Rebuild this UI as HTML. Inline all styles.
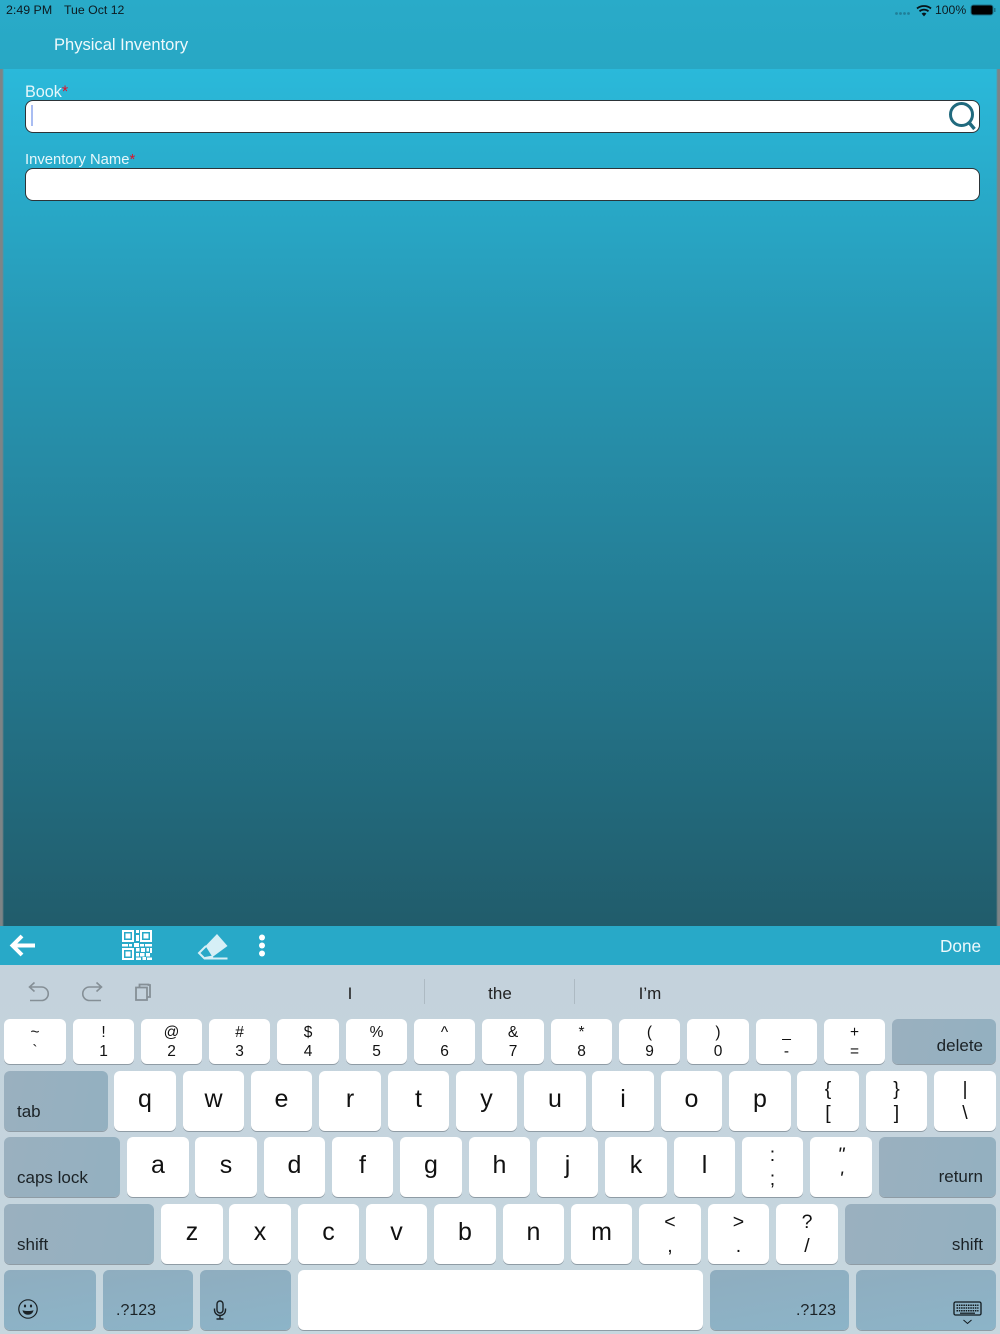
<!DOCTYPE html>
<html><head><meta charset="utf-8"><style>
*{box-sizing:border-box}
html,body{margin:0;padding:0}
body{width:1000px;height:1334px;position:relative;overflow:hidden;font-family:"Liberation Sans",sans-serif;background:#c5d4dd}
.a{position:absolute;white-space:nowrap}
.k{position:absolute;width:62px;background:#fff;border-radius:6px;box-shadow:0 1px 0 #8f9ca5;color:#111;text-align:center}
.g{background:linear-gradient(100deg,#9ab0bf,#93b0c0);color:#1b2226}
.h{background:linear-gradient(170deg,#8fadbf,#8cb4c8)}
.r1{top:1019px;height:45px}.r2{top:1071px;height:60px}.r3{top:1137px;height:60px}.r4{top:1204px;height:60px}.r5{top:1270px;height:60px}
.l{font-size:25px;line-height:57px}
.s1 span,.s2 span{position:absolute;left:0;right:0;display:block;text-align:center}
.s1{font-size:15.5px}.s1 span:first-child{top:5px;line-height:18px}.s1 span:last-child{top:24px;line-height:18px}
.s2{font-size:19.5px}.s2 span:first-child{top:6px;line-height:24px}.s2 span:last-child{top:30px;line-height:24px}
.lb{position:absolute;left:13px;bottom:8px;font-size:17px;line-height:22px}
.rb{position:absolute;right:13px;bottom:8px;font-size:17px;line-height:22px}
.inp{position:absolute;left:25px;width:955px;height:33px;background:#fff;border:1.5px solid #2c3438;border-radius:8px}
</style></head><body>
<div class="a" style="left:0;top:0;width:1000px;height:69px;background:linear-gradient(#29abc9,#28a7c4)"></div>
<div class="a" style="left:0;top:69px;width:1000px;height:857px;background:linear-gradient(#2ab9da 0%,#2799b6 30%,#247a91 65%,#215c6b 100%)"></div>
<div class="a" style="left:0;top:69px;width:4px;height:857px;background:linear-gradient(90deg,#7d8486,#7d8486 55%,rgba(125,132,134,0))"></div>
<div class="a" style="left:996px;top:69px;width:4px;height:857px;background:linear-gradient(270deg,#7d8486,#7d8486 55%,rgba(125,132,134,0))"></div>

<div class="a" style="left:6px;top:3px;font-size:12.4px;line-height:14px;color:#0d1a20">2:49 PM</div>
<div class="a" style="left:64px;top:3px;font-size:12.3px;line-height:14px;color:#0d1a20">Tue Oct 12</div>
<svg class="a" style="left:894px;top:4px" width="106" height="14" viewBox="0 0 106 14">
<g fill="#1f7f98"><circle cx="2.5" cy="9.500" r="1.400"/><circle cx="6.500" cy="9.500" r="1.400"/><circle cx="10.500" cy="9.500" r="1.400"/><circle cx="14.500" cy="9.500" r="1.400"/></g>
<g fill="none" stroke="#07141a" stroke-width="1.800"><path d="M23 4.500a11 11 0 0 1 14 0"/><path d="M25.500 7.300a7 7 0 0 1 9 0"/></g><path d="M27.600 9.600a3.600 3.600 0 0 1 4.800 0L30 12.400z" fill="#07141a"/>
<rect x="77" y="1" width="22" height="10" rx="2.500" fill="#000" stroke="#1b7188" stroke-width="1"/><rect x="100" y="4" width="1.500" height="4" fill="#1b7188"/>
</svg>
<div class="a" style="left:935px;top:3px;font-size:12.200px;line-height:14px;color:#0d1a20">100%</div>
<div class="a" style="left:54px;top:35px;font-size:16.550px;line-height:20px;color:#eef9fc">Physical Inventory</div>

<div class="a" style="left:25px;top:83px;font-size:16.200px;line-height:18px;color:#e6f7fb">Book<span style="color:#e0102a">*</span></div>
<div class="inp" style="top:100px"></div>
<div class="a" style="left:31px;top:105px;width:2px;height:21px;background:#a9bdf2"></div>
<svg class="a" style="left:946px;top:100px" width="34" height="34" viewBox="0 0 34 34"><circle cx="15.500" cy="14.500" r="11" fill="none" stroke="#216a7e" stroke-width="3"/><path d="M23 22.500L28.500 29" stroke="#216a7e" stroke-width="3.400"/></svg>
<div class="a" style="left:25px;top:151px;font-size:14.800px;line-height:18px;color:#e6f7fb">Inventory Name<span style="color:#e0102a">*</span></div>
<div class="inp" style="top:168px"></div>

<div class="a" style="left:0;top:926px;width:1000px;height:39px;background:#28a9c8"></div>
<svg class="a" style="left:8px;top:932px" width="30" height="28" viewBox="0 0 30 28"><path d="M3.500 13.500H27M14 4L4.500 13.500L14 23" fill="none" stroke="#fff" stroke-width="4"/></svg>
<svg class="a" style="left:121px;top:929px" width="32" height="32" viewBox="0 0 32 32" fill="#fff">
<path fill-rule="evenodd" d="M1 1h12v12H1zM3 3v8h8V3zM19 1h12v12H19zM21 3v8h8V3zM1 19h12v12H1zM3 21v8h8v-8z"/>
<path d="M4.500 4.500h5v5h-5zM22.500 4.500h5v5h-5zM4.500 22.500h5v5h-5zM15 1h3v3h-3zM15 6h3v6h-3zM1 15h6v2.500H1zM8 15h3v2.500H8zM13 14h5v4h-5zM19 15h4v2.500h-4zM24 15h7v2.500h-7zM15 19h3.500v3.500H15zM20 19h4v4h-4zM25.500 19h2.500v3.500h-2.500zM29 19h2v5h-2zM15 24h3v3.500h-3zM19 24h4.500v3.500H19zM25 24h4v3.500h-4zM15 28.500h5V31h-5zM21.500 28h3.500v3h-3.500zM26 28.500h5V31h-5z"/></svg>
<svg class="a" style="left:197px;top:932px" width="34" height="30" viewBox="0 0 34 30"><path d="M20 2L30.500 14L15.500 25L8.500 14z" fill="#d6eff6"/><path d="M9 14L2 21L7.500 26.500H30.500M8 26L16 24.500" fill="none" stroke="#d6eff6" stroke-width="2"/></svg>
<svg class="a" style="left:256px;top:933px" width="12" height="26" viewBox="0 0 12 26" fill="#fff"><circle cx="6" cy="4.500" r="3"/><circle cx="6" cy="12.500" r="3"/><circle cx="6" cy="20.500" r="3"/></svg>
<div class="a" style="left:940px;top:936px;font-size:17.200px;line-height:20px;color:#eef9fc">Done</div>

<div class="a" style="left:0;top:965px;width:1000px;height:369px;background:linear-gradient(#c4d2dc,#c6d7df)"></div>
<svg class="a" style="left:25px;top:978px" width="135" height="30" viewBox="0 0 135 30" fill="none" stroke="#858f96" stroke-width="1.600">
<path d="M5 9H16.500a6 6 0 0 1 0 13.500H5M9.500 4.500L4.500 9L9.500 13.500"/>
<path d="M76 9H64.500a6 6 0 0 0 0 13.500H76M71.500 4.500L76.500 9L71.500 13.500"/>
<path d="M111 9.500h11v12.500h-11zM114.500 9.500V6.500h9V7h1.500v12h-3" stroke-width="1.800"/></svg>
<div class="a" style="left:325px;top:984px;width:50px;text-align:center;font-size:17px;line-height:20px;color:#222">I</div>
<div class="a" style="left:424px;top:979px;width:1px;height:25px;background:#adbac3"></div>
<div class="a" style="left:470px;top:984px;width:60px;text-align:center;font-size:17px;line-height:20px;color:#222">the</div>
<div class="a" style="left:574px;top:979px;width:1px;height:25px;background:#adbac3"></div>
<div class="a" style="left:620px;top:984px;width:60px;text-align:center;font-size:17px;line-height:20px;color:#222">I’m</div>

<div class="k r1 s1" style="left:4px"><span>~</span><span>`</span></div>
<div class="k r1 s1" style="left:73px;width:61px"><span>!</span><span>1</span></div>
<div class="k r1 s1" style="left:141px;width:61px"><span>@</span><span>2</span></div>
<div class="k r1 s1" style="left:209px;width:61px"><span>#</span><span>3</span></div>
<div class="k r1 s1" style="left:277px"><span>$</span><span>4</span></div>
<div class="k r1 s1" style="left:346px;width:61px"><span>%</span><span>5</span></div>
<div class="k r1 s1" style="left:414px;width:61px"><span>^</span><span>6</span></div>
<div class="k r1 s1" style="left:482px"><span>&amp;</span><span>7</span></div>
<div class="k r1 s1" style="left:551px;width:61px"><span>*</span><span>8</span></div>
<div class="k r1 s1" style="left:619px;width:61px"><span>(</span><span>9</span></div>
<div class="k r1 s1" style="left:687px"><span>)</span><span>0</span></div>
<div class="k r1 s1" style="left:756px;width:61px"><span>_</span><span>-</span></div>
<div class="k r1 s1" style="left:824px;width:61px"><span>+</span><span>=</span></div>
<div class="k g r1" style="left:892px;width:104px"><span class="rb" style="bottom:7px">delete</span></div>

<div class="k g r2" style="left:4px;width:104px"><span class="lb">tab</span></div>
<div class="k r2 l" style="left:114px">q</div>
<div class="k r2 l" style="left:183px;width:61px">w</div>
<div class="k r2 l" style="left:251px;width:61px">e</div>
<div class="k r2 l" style="left:319px;width:62px">r</div>
<div class="k r2 l" style="left:388px;width:61px">t</div>
<div class="k r2 l" style="left:456px;width:61px">y</div>
<div class="k r2 l" style="left:524px;width:62px">u</div>
<div class="k r2 l" style="left:592px;width:62px">i</div>
<div class="k r2 l" style="left:661px;width:61px">o</div>
<div class="k r2 l" style="left:729px;width:62px">p</div>
<div class="k r2 s2" style="left:797px;width:62px"><span>{</span><span>[</span></div>
<div class="k r2 s2" style="left:866px;width:61px"><span>}</span><span>]</span></div>
<div class="k r2 s2" style="left:934px"><span>|</span><span>\</span></div>

<div class="k g r3" style="left:4px;width:116px"><span class="lb">caps lock</span></div>
<div class="k r3 l" style="left:127px">a</div>
<div class="k r3 l" style="left:195px;width:62px">s</div>
<div class="k r3 l" style="left:264px;width:61px">d</div>
<div class="k r3 l" style="left:332px;width:61px">f</div>
<div class="k r3 l" style="left:400px;width:62px">g</div>
<div class="k r3 l" style="left:469px;width:61px">h</div>
<div class="k r3 l" style="left:537px;width:61px">j</div>
<div class="k r3 l" style="left:605px;width:62px">k</div>
<div class="k r3 l" style="left:674px;width:61px">l</div>
<div class="k r3 s2" style="left:742px;width:61px"><span>:</span><span>;</span></div>
<div class="k r3 s2" style="left:810px;width:62px"><span style="font-style:italic">"</span><span style="font-style:italic">'</span></div>
<div class="k g r3" style="left:879px;width:117px"><span class="rb" style="bottom:9px">return</span></div>

<div class="k g r4" style="left:4px;width:150px"><span class="lb">shift</span></div>
<div class="k r4 l" style="left:161px">z</div>
<div class="k r4 l" style="left:229px;width:62px">x</div>
<div class="k r4 l" style="left:298px;width:61px">c</div>
<div class="k r4 l" style="left:366px;width:61px">v</div>
<div class="k r4 l" style="left:434px;width:62px">b</div>
<div class="k r4 l" style="left:503px;width:61px">n</div>
<div class="k r4 l" style="left:571px;width:61px">m</div>
<div class="k r4 s2" style="left:639px;width:62px"><span>&lt;</span><span>,</span></div>
<div class="k r4 s2" style="left:708px;width:61px"><span>&gt;</span><span>.</span></div>
<div class="k r4 s2" style="left:776px"><span>?</span><span>/</span></div>
<div class="k g r4" style="left:845px;width:151px"><span class="rb">shift</span></div>

<div class="k g h r5" style="left:4px;width:92px"><svg class="a" style="left:13px;top:28px" width="22" height="22" viewBox="0 0 22 22"><circle cx="11" cy="11" r="9.200" fill="none" stroke="#1b2226" stroke-width="1.200"/><ellipse cx="8" cy="8" rx="1.100" ry="1.500" fill="#1b2226"/><ellipse cx="14" cy="8" rx="1.100" ry="1.500" fill="#1b2226"/><path d="M5.500 12.200c3.500 1 7.500 1 11 0c-.6 3-2.800 4.500-5.500 4.500s-4.900-1.500-5.500-4.500z" fill="#1b2226"/></svg></div>
<div class="k g h r5" style="left:103px;width:90px"><span class="lb" style="left:13px;bottom:8px;font-size:16px">.?123</span></div>
<div class="k g h r5" style="left:200px;width:91px"><svg class="a" style="left:12px;top:30px" width="16" height="20" viewBox="0 0 16 20" fill="none" stroke="#1b2226" stroke-width="1.400"><rect x="5" y="1" width="6" height="12" rx="3"/><path d="M2.500 8.500v1.500a5.500 5.500 0 0 0 11 0V8.500M8 15.500v3M4.500 19h7"/></svg></div>
<div class="k r5" style="left:298px;width:405px"></div>
<div class="k g h r5" style="left:710px;width:139px"><span class="rb" style="bottom:8px;font-size:16px">.?123</span></div>
<div class="k g h r5" style="left:856px;width:140px"><svg class="a" style="left:97px;top:31px" width="30" height="26" viewBox="0 0 30 26"><rect x="1" y="1" width="27" height="13" rx="1.500" fill="none" stroke="#10181c" stroke-width="1.300"/><path d="M3.500 4.200h22M3.500 7h22M3.500 9.800h22" stroke="#10181c" stroke-width="1.500" stroke-dasharray="1.500 .8"/><path d="M7 12.200h15" stroke="#10181c" stroke-width="1.200"/><path d="M10.500 19l4 3.500l4-3.500" fill="none" stroke="#10181c" stroke-width="1"/></svg></div>
</body></html>
